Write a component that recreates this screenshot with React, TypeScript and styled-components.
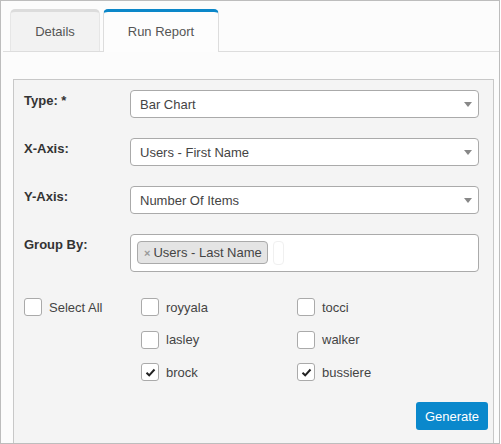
import React from 'react';
import styled, { createGlobalStyle } from 'styled-components';

const GlobalStyle = createGlobalStyle`
  html, body {
    margin: 0;
    padding: 0;
    background: #ffffff;
  }
  body {
    font-family: "Liberation Sans", Arial, sans-serif;
    font-size: 13px;
    color: #333;
  }
`;

const Frame = styled.div`
  width: 500px;
  height: 444px;
  box-sizing: border-box;
  border: 1px solid #bdbdbd;
  background: #fcfcfc;
  overflow: hidden;
  padding-top: 8px;
`;

const TabBar = styled.div`
  display: flex;
  gap: 3px;
  margin-left: 2px;
  padding-left: 7px;
  border-bottom: 1px solid #dddddd;
  height: 42px;
`;

const Tab = styled.div<{ $active?: boolean }>`
  box-sizing: border-box;
  height: ${p => (p.$active ? 43 : 42)}px;
  width: ${p => (p.$active ? 116 : 90)}px;
  display: flex;
  align-items: center;
  justify-content: center;
  padding-bottom: 1px;
  border: 1px solid ${p => (p.$active ? '#dddddd' : '#e6e6e6')};
  border-top: 3px solid ${p => (p.$active ? '#0b87c9' : '#dcdcdc')};
  border-bottom: none;
  border-radius: 5px 5px 0 0;
  background: ${p => (p.$active ? '#fdfdfd' : '#f2f2f2')};
  color: #555;
  font-size: 13px;
`;

const Panel = styled.div`
  margin: 27px 5px 0 12px;
  border: 1px solid #c8c8c8;
  background: #f4f4f4;
  padding: 10px 14px 20px 10px;
  height: 400px;
`;

const FieldRow = styled.div<{ $last?: boolean }>`
  display: flex;
  align-items: flex-start;
  margin-bottom: ${p => (p.$last ? 0 : 20)}px;
`;

const Label = styled.div`
  width: 106px;
  flex: none;
  font-weight: bold;
  color: #333;
  padding-top: 3px;
`;

const Select = styled.div`
  flex: 1;
  box-sizing: border-box;
  height: 28px;
  border: 1px solid #aaaaaa;
  border-radius: 4px;
  background: #fff;
  display: flex;
  align-items: center;
  padding: 0 9px;
  color: #444;
  position: relative;

  &::after {
    content: '';
    position: absolute;
    right: 6px;
    top: 11px;
    border-top: 5px solid #888;
    border-left: 4px solid transparent;
    border-right: 4px solid transparent;
  }
`;

const MultiSelect = styled.div`
  flex: 1;
  box-sizing: border-box;
  height: 38px;
  border: 1px solid #aaaaaa;
  border-radius: 4px;
  background: #fff;
  display: flex;
  align-items: flex-start;
  gap: 5px;
  padding: 6px 6px 0;
`;

const Tag = styled.div`
  box-sizing: border-box;
  height: 23px;
  display: flex;
  align-items: center;
  gap: 3px;
  padding: 0 5px 0 6px;
  border: 1px solid #aaaaaa;
  border-radius: 4px;
  background: #e4e4e4;
  color: #444;
`;

const TagRemove = styled.span`
  color: #999;
  font-size: 11px;
  font-weight: bold;
`;

const SearchStub = styled.div`
  width: 9px;
  height: 22px;
  border: 1px solid #f0f0f0;
  border-radius: 4px;
`;

const CheckGrid = styled.div`
  display: grid;
  grid-template-columns: 117px 156px 1fr;
  grid-auto-rows: 18px;
  row-gap: 14.5px;
  margin-top: 26px;
`;

const CheckItem = styled.label`
  display: flex;
  align-items: center;
  gap: 7px;
  color: #444;
`;

const Box = styled.span`
  box-sizing: border-box;
  width: 18px;
  height: 18px;
  border: 1px solid #aaaaaa;
  border-radius: 3px;
  background: #fff;
  display: flex;
  align-items: center;
  justify-content: center;
`;

const Footer = styled.div`
  display: flex;
  justify-content: flex-end;
  margin-top: 21px;
  margin-right: -9px;
`;

const Button = styled.button`
  width: 72px;
  height: 28px;
  border: none;
  border-radius: 3px;
  background: #0a88cc;
  color: #fff;
  font-family: "Liberation Sans", Arial, sans-serif;
  font-size: 13px;
  padding: 0;
`;

const Check = () => (
  <svg width="11" height="9" viewBox="0 0 11 9">
    <path d="M1.5 4.8 L4.2 7.3 L9.5 1.5" fill="none" stroke="#222" strokeWidth="2" />
  </svg>
);

const CheckBox: React.FC<{ label: string; checked?: boolean; col: number; row: number }> = ({
  label,
  checked,
  col,
  row,
}) => (
  <CheckItem style={{ gridColumn: col, gridRow: row }}>
    <Box>{checked && <Check />}</Box>
    {label}
  </CheckItem>
);

const users = [
  { name: 'royyala', col: 2, row: 1 },
  { name: 'tocci', col: 3, row: 1 },
  { name: 'lasley', col: 2, row: 2 },
  { name: 'walker', col: 3, row: 2 },
  { name: 'brock', col: 2, row: 3, checked: true },
  { name: 'bussiere', col: 3, row: 3, checked: true },
];

export default function App() {
  return (
    <>
      <GlobalStyle />
      <Frame>
        <TabBar>
          <Tab>Details</Tab>
          <Tab $active>Run Report</Tab>
        </TabBar>
        <Panel>
          <FieldRow>
            <Label>Type: *</Label>
            <Select>Bar Chart</Select>
          </FieldRow>
          <FieldRow>
            <Label>X-Axis:</Label>
            <Select>Users - First Name</Select>
          </FieldRow>
          <FieldRow>
            <Label>Y-Axis:</Label>
            <Select>Number Of Items</Select>
          </FieldRow>
          <FieldRow $last>
            <Label>Group By:</Label>
            <MultiSelect>
              <Tag>
                <TagRemove>×</TagRemove>
                Users - Last Name
              </Tag>
              <SearchStub />
            </MultiSelect>
          </FieldRow>
          <CheckGrid>
            <CheckBox label="Select All" col={1} row={1} />
            {users.map(u => (
              <CheckBox key={u.name} label={u.name} col={u.col} row={u.row} checked={u.checked} />
            ))}
          </CheckGrid>
          <Footer>
            <Button>Generate</Button>
          </Footer>
        </Panel>
      </Frame>
    </>
  );
}
